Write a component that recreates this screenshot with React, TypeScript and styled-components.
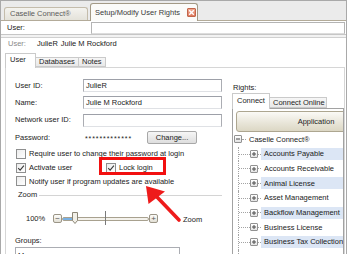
import styled, { createGlobalStyle } from "styled-components";

const GlobalStyle = createGlobalStyle`
  html, body { margin: 0; padding: 0; background: #ffffff; }
  *, *::before, *::after { box-sizing: border-box; }
`;

const Frame = styled.div`
  position: relative;
  width: 347px;
  height: 254px;
  overflow: hidden;
  display: flex;
  flex-direction: column;
  background: #fff;
  border: 1px solid #a9a9a9;
  border-bottom: none;
  font-family: "Liberation Sans", Arial, sans-serif;
  font-size: 7.5px;
  line-height: 1;
  color: #222;
`;

const DocTabs = styled.div`
  height: 20px;
  flex: none;
  display: flex;
  align-items: flex-end;
  gap: 2px;
  padding-left: 3px;
  background: #ebebeb;
  border-bottom: 1px solid #b3ab99;
`;

const DocTab = styled.div<{ $active?: boolean; $w: number }>`
  position: relative;
  width: ${({ $w }) => $w}px;
  height: ${({ $active }) => ($active ? 18 : 13)}px;
  margin-bottom: ${({ $active }) => ($active ? -1 : 0)}px;
  display: flex;
  align-items: center;
  padding: 0 1px 0 ${({ $active }) => ($active ? 4 : 5)}px;
  border: 1px solid ${({ $active }) => ($active ? "#a39a86" : "#c4bcab")};
  border-bottom: none;
  border-radius: 3px 3px 0 0;
  background: ${({ $active }) =>
    $active ? "#fbfbf9" : "linear-gradient(#f4f3ef, #e4e2da)"};
  color: ${({ $active }) => ($active ? "#3a3a3a" : "#5a5a5a")};
`;

const CloseIcon = styled.span`
  margin-left: auto;
  width: 9px;
  height: 9px;
  border: 1px solid #c2664a;
  border-radius: 1px;
  background: linear-gradient(#f0a890, #de7a5e);
  display: flex;
  align-items: center;
  justify-content: center;
`;

const UserBar = styled.div`
  height: 13px;
  flex: none;
  display: flex;
  align-items: center;
  padding: 1px 1px 0 6px;
`;

const BarLabel = styled.span`
  width: 84px;
  flex: none;
`;

const BarInput = styled.div`
  flex: 1;
  height: 12px;
  border: 1px solid #b4b4b4;
  border-bottom-color: #dcdcdc;
`;

const Separator = styled.div`
  height: 4px;
  flex: none;
  background: #f2f2f2;
  border-top: 1px solid #c6c6c6;
  border-bottom: 1px solid #d0d0d0;
`;

const InfoLine = styled.div`
  height: 15px;
  flex: none;
  display: flex;
  align-items: center;
  padding: 0 0 3px 7px;
`;

const InfoLabel = styled.span`
  width: 29px;
  color: #8a8a8a;
`;

const InfoValue = styled.span`
  margin-right: 3px;
  color: #1a1a1a;
`;

const TabRow = styled.div`
  height: 14px;
  flex: none;
  display: flex;
  align-items: flex-end;
  padding-left: 4px;
`;

const PageTab = styled.div<{ $active?: boolean; $w: number; $h: number }>`
  position: relative;
  z-index: ${({ $active }) => ($active ? 2 : 1)};
  width: ${({ $w }) => $w}px;
  height: ${({ $h }) => $h}px;
  margin-bottom: ${({ $active }) => ($active ? -1 : 0)}px;
  margin-left: ${({ $active }) => ($active ? 0 : -1)}px;
  display: flex;
  align-items: center;
  padding: ${({ $active }) => ($active ? "0 0 2px 4px" : "0 0 0 3px")};
  border: 1px solid #cacaca;
  border-bottom: ${({ $active }) => ($active ? "none" : "1px solid #cacaca")};
  background: ${({ $active }) => ($active ? "#ffffff" : "linear-gradient(#f6f6f6, #e8e8e8)")};
  color: #1e1e1e;
  &:first-child {
    margin-left: 0;
  }
`;

const TabPage = styled.div`
  flex: 1;
  display: flex;
  margin: 0 1px 0 4px;
  border: 1px solid #d6d6d6;
  border-bottom: none;
  min-height: 0;
`;

const LeftCol = styled.div`
  width: 222px;
  flex: none;
  display: flex;
  flex-direction: column;
  padding: 11px 6px 0 9px;
`;

const Form = styled.div`
  flex: none;
  display: grid;
  grid-template-columns: 68px 139px;
  grid-auto-rows: 13px;
  row-gap: 4.3px;
  align-items: center;
`;

const Field = styled.div`
  height: 13px;
  display: flex;
  align-items: center;
  padding-left: 2px;
  border: 1px solid #abadb3;
  border-top-color: #9da0a8;
  border-bottom-color: #dfe1e5;
`;

const PasswordCell = styled.div`
  display: flex;
  align-items: center;
  padding-left: 2px;
`;

const Stars = styled.span`
  width: 62px;
  letter-spacing: 0.9px;
  font-size: 7px;
  padding-top: 2px;
`;

const Button = styled.div`
  width: 50px;
  height: 13px;
  display: flex;
  align-items: center;
  justify-content: center;
  border: 1px solid #a8a8a8;
  border-radius: 2px;
  background: linear-gradient(#f6f6f6, #dedede);
`;

const Checks = styled.div`
  flex: none;
  margin-top: 3px;
  display: flex;
  flex-direction: column;
`;

const CheckRow = styled.div<{ $cols?: string }>`
  height: 13.75px;
  flex: none;
  display: grid;
  grid-template-columns: ${({ $cols }) => $cols || "auto"};
  align-items: center;
  padding-left: 1px;
`;

const CheckItem = styled.label`
  display: flex;
  align-items: center;
  gap: 3px;
  white-space: nowrap;
`;

const Box = styled.span`
  width: 10px;
  height: 10px;
  flex: none;
  display: flex;
  align-items: center;
  justify-content: center;
  border: 1px solid #8e8f8f;
  background: linear-gradient(135deg, #ececec, #ffffff);
`;

const GroupHead = styled.div`
  height: 14px;
  flex: none;
  display: flex;
  align-items: center;
  gap: 2px;
  padding-left: 3px;
`;

const GroupLine = styled.span`
  flex: 1;
  height: 1px;
  background: #d4d4d4;
`;

const SliderRow = styled.div`
  height: 14px;
  flex: none;
  margin-top: 9.75px;
  display: flex;
  align-items: center;
  padding-left: 11px;
`;

const Percent = styled.span`
  width: 27px;
`;

const Slider = styled.div`
  width: 105px;
  height: 14px;
  display: flex;
  align-items: center;
`;

const StepButton = styled.span`
  width: 9px;
  height: 9px;
  flex: none;
  display: flex;
  align-items: center;
  justify-content: center;
  border: 1px solid #9b9587;
  border-radius: 2px;
  background: linear-gradient(#fdfdfb, #e2dfd4);
  color: #555;
  font-size: 8px;
`;

const Track = styled.span`
  position: relative;
  flex: 1;
  height: 4px;
  border: 1px solid #a8a18f;
  border-radius: 2px;
  background: #f4f2ec;
`;

const Fill = styled.span`
  position: absolute;
  left: 0;
  top: 0;
  bottom: 0;
  width: 11px;
  background: #79b0e2;
`;

const Tick = styled.span`
  position: absolute;
  left: 42px;
  top: -7px;
  width: 1px;
  height: 14px;
  background: #7a7a7a;
`;

const Thumb = styled.svg`
  position: absolute;
  left: 9px;
  top: -6px;
`;

const SliderCaption = styled.span`
  margin-left: 25px;
  padding-top: 2px;
`;

const GroupsLabel = styled.div`
  height: 12px;
  flex: none;
  margin-top: 9px;
  display: flex;
  align-items: center;
`;

const GroupsBox = styled.div`
  width: 165px;
  height: 20px;
  flex: none;
  padding: 4px 0 0 2px;
  border: 1px solid #abadb3;
`;

const RightCol = styled.div`
  flex: 1;
  min-width: 0;
  display: flex;
  flex-direction: column;
  padding: 14px 0 0 4px;
`;

const RightsLabel = styled.div`
  height: 11px;
  flex: none;
  display: flex;
  align-items: center;
  padding-left: 1px;
`;

const SubTabs = styled.div`
  height: 15px;
  flex: none;
  display: flex;
  align-items: flex-end;
`;

const TreeBox = styled.div`
  flex: 1;
  display: flex;
  flex-direction: column;
  overflow: hidden;
  padding: 2px 0 0 3px;
  border: 1px solid #a2a2a2;
  border-bottom: none;
`;

const ColumnHeader = styled.div`
  width: 160px;
  height: 21px;
  flex: none;
  display: flex;
  align-items: center;
  justify-content: center;
  border: 1px solid #ada690;
  border-radius: 3px;
  background: linear-gradient(#fbfaf6, #e9e6da 55%, #dcd7c4);
  color: #1e1e1e;
`;

const TreeBody = styled.div`
  flex: 1;
  margin-left: -3px;
  display: flex;
  flex-direction: column;
`;

const TreeRow = styled.div<{ $child?: boolean }>`
  height: 14.7px;
  flex: none;
  display: flex;
  align-items: center;
  padding-left: ${({ $child }) => ($child ? 5 : 1)}px;
`;

const GuideTail = styled.div`
  flex: 1;
  margin-left: 5px;
  border-left: 1px dotted #a3a3a3;
`;

const Guide = styled.span`
  align-self: stretch;
  width: 12px;
  flex: none;
  display: flex;
  align-items: center;
  border-left: 1px dotted #a3a3a3;
  &::after {
    content: "";
    width: 100%;
    border-top: 1px dotted #a3a3a3;
  }
`;

const Expander = styled.span`
  width: 8px;
  height: 8px;
  flex: none;
  display: flex;
  align-items: center;
  justify-content: center;
  border: 1px solid #929292;
  border-radius: 1px;
  background: linear-gradient(#ffffff, #e4e4e4);
`;

const Dash = styled.span<{ $w: number }>`
  width: ${({ $w }) => $w}px;
  flex: none;
  border-top: 1px dotted #a3a3a3;
`;

const NodeLabel = styled.span<{ $shaded?: boolean }>`
  flex: 1;
  height: 12px;
  display: flex;
  align-items: center;
  padding-left: 3px;
  white-space: nowrap;
  background: ${({ $shaded }) => ($shaded ? "#dce6f5" : "transparent")};
  color: #1a1a1a;
`;

const Callout = styled.div`
  position: absolute;
  left: 98px;
  top: 156px;
  width: 67px;
  height: 18px;
  border: 3px solid #f21010;
  pointer-events: none;
`;

const ArrowLayer = styled.svg`
  position: absolute;
  left: 0;
  top: 0;
  pointer-events: none;
`;

function Check({ checked }: { checked?: boolean }) {
  return (
    <Box>
      {checked && (
        <svg width="8" height="8" viewBox="0 0 8 8">
          <path d="M1.2 4.2 L3.1 6.1 L6.9 1.6" fill="none" stroke="#3a3a3a" strokeWidth="1.1" />
        </svg>
      )}
    </Box>
  );
}

function Toggle({ open }: { open?: boolean }) {
  return (
    <Expander>
      <svg width="6" height="6" viewBox="0 0 6 6">
        <path d="M1 3 H5" stroke="#4a4a4a" strokeWidth="1" />
        {!open && <path d="M3 1 V5" stroke="#4a4a4a" strokeWidth="1" />}
      </svg>
    </Expander>
  );
}

const MODULES = [
  "Accounts Payable",
  "Accounts Receivable",
  "Animal License",
  "Asset Management",
  "Backflow Management",
  "Business License",
  "Business Tax Collection",
];

export default function App() {
  return (
    <>
      <GlobalStyle />
      <Frame>
        <DocTabs>
          <DocTab $w={84}>Caselle Connect®</DocTab>
          <DocTab $w={108} $active>
            Setup/Modify User Rights
            <CloseIcon>
              <svg width="7" height="7" viewBox="0 0 7 7">
                <path d="M1.2 1.2 L5.8 5.8 M5.8 1.2 L1.2 5.8" stroke="#fff" strokeWidth="1.4" />
              </svg>
            </CloseIcon>
          </DocTab>
        </DocTabs>

        <UserBar>
          <BarLabel>User:</BarLabel>
          <BarInput />
        </UserBar>
        <Separator />

        <InfoLine>
          <InfoLabel>User:</InfoLabel>
          <InfoValue>JulieR</InfoValue>
          <InfoValue>Julie M Rockford</InfoValue>
        </InfoLine>

        <TabRow>
          <PageTab $w={31} $h={15} $active>User</PageTab>
          <PageTab $w={44} $h={10}>Databases</PageTab>
          <PageTab $w={28} $h={10}>Notes</PageTab>
        </TabRow>

        <TabPage>
          <LeftCol>
            <Form>
              <span>User ID:</span>
              <Field>JulieR</Field>
              <span>Name:</span>
              <Field>Julie M Rockford</Field>
              <span>Network user ID:</span>
              <Field />
              <span>Password:</span>
              <PasswordCell>
                <Stars>*************</Stars>
                <Button>Change...</Button>
              </PasswordCell>
            </Form>

            <Checks>
              <CheckRow>
                <CheckItem>
                  <Check />
                  Require user to change their password at login
                </CheckItem>
              </CheckRow>
              <CheckRow $cols="90px auto">
                <CheckItem>
                  <Check checked />
                  Activate user
                </CheckItem>
                <CheckItem>
                  <Check checked />
                  Lock login
                </CheckItem>
              </CheckRow>
              <CheckRow>
                <CheckItem>
                  <Check />
                  Notify user if program updates are available
                </CheckItem>
              </CheckRow>
            </Checks>

            <GroupHead>
              Zoom
              <GroupLine />
            </GroupHead>

            <SliderRow>
              <Percent>100%</Percent>
              <Slider>
                <StepButton>−</StepButton>
                <Track>
                  <Fill />
                  <Tick />
                  <Thumb width="6" height="12" viewBox="0 0 6 12">
                    <path d="M0.5 0.5 H5.5 V8.5 L3 11.5 L0.5 8.5 Z" fill="#f2f0e8" stroke="#8c8677" strokeWidth="1" />
                  </Thumb>
                </Track>
                <StepButton>+</StepButton>
              </Slider>
              <SliderCaption>Zoom</SliderCaption>
            </SliderRow>

            <GroupsLabel>Groups:</GroupsLabel>
            <GroupsBox>Managers</GroupsBox>
          </LeftCol>

          <RightCol>
            <RightsLabel>Rights:</RightsLabel>
            <SubTabs>
              <PageTab $w={38} $h={16} $active>Connect</PageTab>
              <PageTab $w={58} $h={11}>Connect Online</PageTab>
            </SubTabs>
            <TreeBox>
              <ColumnHeader>Application</ColumnHeader>
              <TreeBody>
                <TreeRow>
                  <Toggle open />
                  <Dash $w={4} />
                  <NodeLabel>Caselle Connect®</NodeLabel>
                </TreeRow>
                {MODULES.map((name, i) => (
                  <TreeRow key={name} $child>
                    <Guide />
                    <Toggle />
                    <Dash $w={3} />
                    <NodeLabel $shaded={i % 2 === 0}>{name}</NodeLabel>
                  </TreeRow>
                ))}
                <GuideTail />
              </TreeBody>
            </TreeBox>
          </RightCol>
        </TabPage>

        <Callout />
        <ArrowLayer width="347" height="254" viewBox="0 0 347 254">
          <path d="M156 196 L178 219" stroke="#ee1b1b" strokeWidth="3.6" strokeLinecap="round" />
          <path d="M145 185 L147.5 203 L164 190.5 Z" fill="#ee1b1b" />
        </ArrowLayer>
      </Frame>
    </>
  );
}
